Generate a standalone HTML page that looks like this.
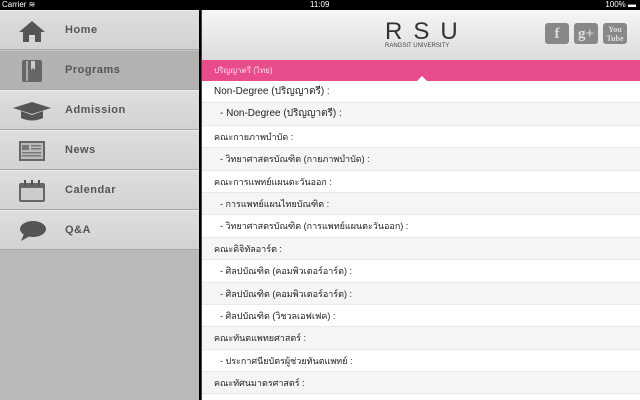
<!DOCTYPE html>
<html><head><meta charset="utf-8"><style>
body{margin:0;width:640px;height:400px;overflow:hidden;background:#000;font-family:"Liberation Sans","Noto Sans CJK SC",sans-serif;position:relative}
.sb{position:absolute;top:0;left:0;width:640px;height:10px;background:#000;color:#fff;font-size:8px;line-height:10px}
.side{position:absolute;top:10px;left:0;width:199px;height:390px;background:#b9b9b9}
.it{height:38px;border-bottom:1px solid #a8a8a8;border-top:1px solid #ececec;background:linear-gradient(#dedede,#d2d2d2);position:relative;color:#555;font-size:11px;font-weight:bold;letter-spacing:.5px}
.it.sel{background:#b2b2b2;border-top-color:#c4c4c4}
.it span{position:absolute;left:65px;top:13px}
.ic{position:absolute;left:18px;top:8px}
.main{position:absolute;top:10px;left:201px;width:439px;height:390px;background:#fff;border-left:1px solid #444}
.hd{height:50px;background:linear-gradient(#f6f6f6,#dcdcdc);position:relative}
.logo{position:absolute;left:183px;top:8px;font-size:24px;letter-spacing:11px;color:#333}
.sub{position:absolute;left:183px;top:33px;font-size:6px;color:#444}
.soc{position:absolute;top:13px;width:24px;height:21px;background:#888;border-radius:3px;color:#ddd;font-size:15px;font-weight:bold;text-align:center;line-height:22px;font-family:"Liberation Serif",serif}
.pink{height:21px;background:#e84c8d;color:#fde;font-size:8px;line-height:21px;padding-left:12px;position:relative}
.pink:after{content:"";position:absolute;left:215px;bottom:0;border:5px solid transparent;border-bottom-color:#fff}
.r{height:22.4px;line-height:22px;font-size:9px;color:#222;padding-left:12px;box-sizing:border-box;border-bottom:1px solid #e8e8e8}
.r:nth-child(even){background:#f5f5f5}
.r.big{font-size:10px}
.r.in{padding-left:18px}
</style></head><body>
<div class="sb"><span style="position:absolute;left:2px">Carrier ≋</span><span style="position:absolute;left:310px">11:09</span><span style="position:absolute;right:4px">100% ▬</span></div>
<div class="side">
<div class="it"><svg class="ic" width="28" height="24"><path d="M14 2 L27 13 H23 V23 H17 V16 H11 V23 H5 V13 H1Z" fill="#555"/></svg><span>Home</span></div>
<div class="it sel"><svg class="ic" width="28" height="24"><rect x="4" y="1" width="20" height="22" rx="2" fill="#666"/><rect x="8" y="2" width="2" height="20" fill="#aaa"/><path d="M13 2V11L15 9L17 11V2" fill="#ccc"/></svg><span>Programs</span></div>
<div class="it"><svg class="ic" style="left:12px" width="40" height="24"><path d="M1 9 L20 3 L39 9 L20 15Z" fill="#555"/><path d="M9 12V19Q20 24 31 19V12L20 16Z" fill="#555"/></svg><span>Admission</span></div>
<div class="it"><svg class="ic" width="28" height="24"><rect x="1" y="2" width="26" height="20" fill="#666"/><rect x="3" y="4" width="22" height="16" fill="#bbb"/><rect x="4" y="6" width="7" height="5" fill="#777"/><rect x="13" y="6" width="10" height="1.5" fill="#777"/><rect x="13" y="9" width="10" height="1.5" fill="#777"/><rect x="4" y="13" width="19" height="1.5" fill="#777"/><rect x="4" y="16" width="19" height="1.5" fill="#777"/></svg><span>News</span></div>
<div class="it"><svg class="ic" width="28" height="24"><rect x="1" y="4" width="26" height="19" rx="2" fill="#666"/><rect x="3" y="9" width="22" height="12" fill="#ccc"/><rect x="6" y="1" width="2" height="6" fill="#555"/><rect x="13" y="1" width="2" height="6" fill="#555"/><rect x="20" y="1" width="2" height="6" fill="#555"/></svg><span>Calendar</span></div>
<div class="it"><svg class="ic" width="30" height="24"><ellipse cx="15" cy="10" rx="13" ry="8" fill="#555"/><path d="M6 15 L3 22 L12 17Z" fill="#555"/></svg><span>Q&amp;A</span></div>
</div>
<div class="main">
<div class="hd"><div class="logo">RSU</div><div class="sub">RANGSIT UNIVERSITY</div>
<div class="soc" style="left:343px">f</div><div class="soc" style="left:372px">g+</div><div class="soc" style="left:401px;font-size:8px;line-height:9px;padding-top:2px;height:19px">You<br>Tube</div></div>
<div class="pink">ปริญญาตรี (ไทย)</div>
<div>
<div class="r big">Non-Degree (ปริญญาตรี) :</div>
<div class="r big in">- Non-Degree (ปริญญาตรี) :</div>
<div class="r">คณะกายภาพบำบัด :</div>
<div class="r in">- วิทยาศาสตรบัณฑิต (กายภาพบำบัด) :</div>
<div class="r">คณะการแพทย์แผนตะวันออก :</div>
<div class="r in">- การแพทย์แผนไทยบัณฑิต :</div>
<div class="r in">- วิทยาศาสตรบัณฑิต (การแพทย์แผนตะวันออก) :</div>
<div class="r">คณะดิจิทัลอาร์ต :</div>
<div class="r in">- ศิลปบัณฑิต (คอมพิวเตอร์อาร์ต) :</div>
<div class="r in">- ศิลปบัณฑิต (คอมพิวเตอร์อาร์ต) :</div>
<div class="r in">- ศิลปบัณฑิต (วิชวลเอฟเฟค) :</div>
<div class="r">คณะทันตแพทยศาสตร์ :</div>
<div class="r in">- ประกาศนียบัตรผู้ช่วยทันตแพทย์ :</div>
<div class="r">คณะทัศนมาตรศาสตร์ :</div>
</div></div>
</body></html>
